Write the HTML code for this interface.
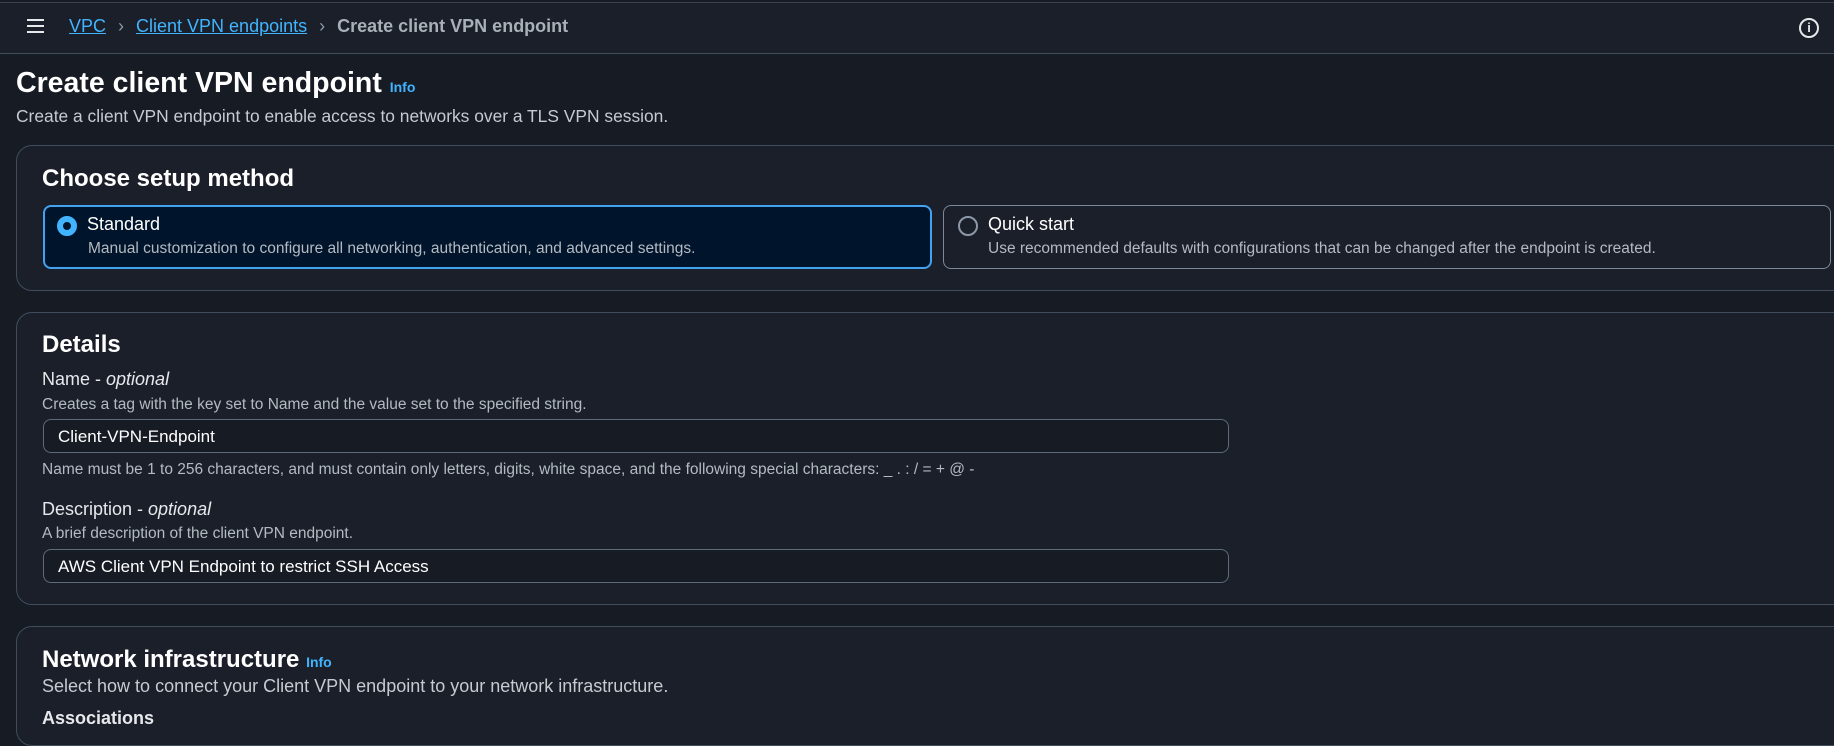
<!DOCTYPE html>
<html><head><meta charset="utf-8"><style>
*{box-sizing:border-box;margin:0;padding:0}
body{width:1834px;height:717px;overflow:hidden;background:#161b24;font-family:"Liberation Sans",sans-serif;color:#d1d5db;position:relative}
.abs{position:absolute;white-space:nowrap}
.top{position:absolute;left:0;top:2px;width:1834px;height:52px;background:#1a1f29;border-top:1px solid #3a4250;border-bottom:1px solid #414d5c}
.card{position:absolute;left:16px;width:1840px;background:#1a1f29;border:1px solid #414d5c;border-radius:16px}
.tile{position:absolute;border-radius:8px}
.input{position:absolute;left:43px;width:1186px;height:34px;border:1px solid #5f6b7a;border-radius:8px;background:#161b24;color:#fff;font-size:17px;padding:7px 0 0 14px}
a{color:#42b4ff;text-decoration:underline}
.h2{font-size:24px;font-weight:bold;color:#fff}
.lab{font-size:18px;color:#e6e8eb}
.sm{font-size:15.5px;color:#b4bac2}
.info{color:#42b4ff;font-size:14px;font-weight:bold}
</style></head><body>
<div class="top"></div>
<div class="abs" style="left:27px;top:19px;width:17px;height:14px;border-top:2.5px solid #e6e8eb;border-bottom:2.5px solid #e6e8eb"><div style="margin-top:3.5px;border-top:2.5px solid #e6e8eb"></div></div>
<div class="abs" style="left:69px;top:16px;font-size:18px"><a>VPC</a><span style="color:#8d99a8;margin:0 12px">›</span><a>Client VPN endpoints</a><span style="color:#8d99a8;margin:0 12px">›</span><span style="color:#a9b0b8;font-weight:bold">Create client VPN endpoint</span></div>
<div class="abs" style="left:1799px;top:18px;width:20px;height:20px;border:2px solid #e6e8eb;border-radius:50%;color:#e6e8eb;font-size:13px;font-weight:bold;text-align:center;line-height:16px">i</div>
<div class="abs" style="left:16px;top:67px;font-size:28.5px;font-weight:bold;color:#fff">Create client VPN endpoint <span class="info">Info</span></div>
<div class="abs" style="left:16px;top:106px;font-size:17.4px;color:#c6cbd1">Create a client VPN endpoint to enable access to networks over a TLS VPN session.</div>

<div class="card" style="top:145px;height:146px"></div>
<div class="abs h2" style="left:42px;top:165px">Choose setup method</div>
<div class="tile" style="left:43px;top:205px;width:889px;height:64px;background:#00142b;border:2px solid #42a2f0"></div>
<div class="abs" style="left:57px;top:216px;width:20px;height:20px;border-radius:50%;border:6px solid #42b4ff;background:#00142b"></div>
<div class="abs" style="left:87px;top:214px;font-size:18px;color:#fff">Standard</div>
<div class="abs sm" style="left:88px;top:240px">Manual customization to configure all networking, authentication, and advanced settings.</div>
<div class="tile" style="left:943px;top:205px;width:888px;height:64px;border:1px solid #7d8998"></div>
<div class="abs" style="left:958px;top:216px;width:20px;height:20px;border-radius:50%;border:2px solid #8d99a8"></div>
<div class="abs" style="left:988px;top:214px;font-size:18px;color:#fff">Quick start</div>
<div class="abs sm" style="left:988px;top:240px">Use recommended defaults with configurations that can be changed after the endpoint is created.</div>

<div class="card" style="top:312px;height:293px"></div>
<div class="abs h2" style="left:42px;top:331px">Details</div>
<div class="abs lab" style="left:42px;top:369px">Name - <i>optional</i></div>
<div class="abs sm" style="left:42px;top:396px">Creates a tag with the key set to Name and the value set to the specified string.</div>
<div class="input" style="top:419px">Client-VPN-Endpoint</div>
<div class="abs sm" style="left:42px;top:461px">Name must be 1 to 256 characters, and must contain only letters, digits, white space, and the following special characters: _ . : / = + @ -</div>
<div class="abs lab" style="left:42px;top:499px">Description - <i>optional</i></div>
<div class="abs sm" style="left:42px;top:525px">A brief description of the client VPN endpoint.</div>
<div class="input" style="top:549px">AWS Client VPN Endpoint to restrict SSH Access</div>

<div class="card" style="top:626px;height:120px"></div>
<div class="abs h2" style="left:42px;top:646px">Network infrastructure <span class="info">Info</span></div>
<div class="abs" style="left:42px;top:676px;font-size:18px;color:#c6cbd1">Select how to connect your Client VPN endpoint to your network infrastructure.</div>
<div class="abs lab" style="left:42px;top:708px;font-weight:bold">Associations</div>
</body></html>
